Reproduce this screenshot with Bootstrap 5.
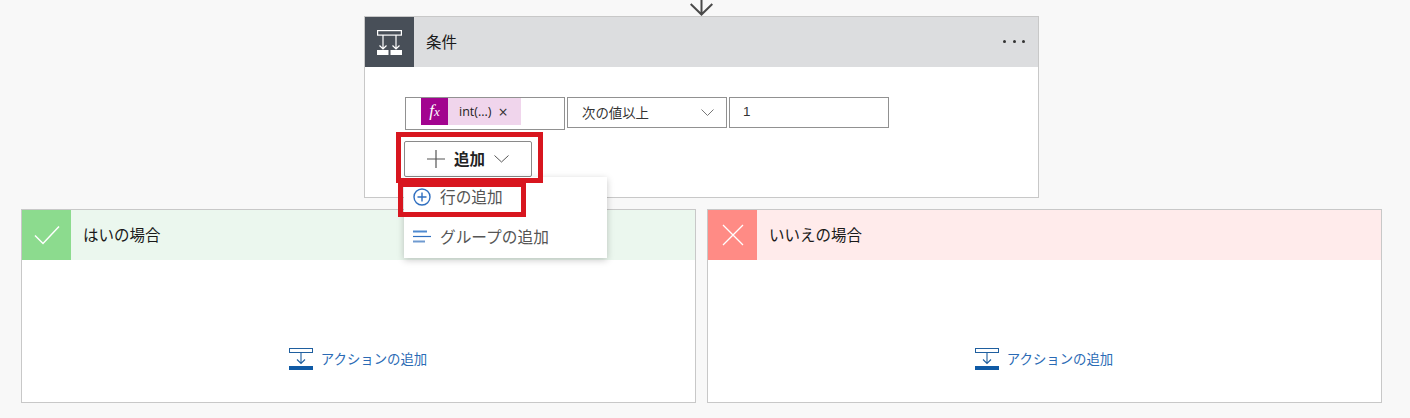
<!DOCTYPE html>
<html lang="ja">
<head>
<meta charset="utf-8">
<title>条件</title>
<link href="https://cdn.jsdelivr.net/npm/bootstrap@5.3.0/dist/css/bootstrap.min.css" rel="stylesheet">
<style>
html,body{height:100%;overflow:hidden}
body{background:#f8f8f8;font-family:"Open Sans","Noto Sans CJK JP",sans-serif;color:#222;width:1410px;height:418px}
.ja{font-family:"Noto Sans CJK JP",sans-serif}
.flow-arrow{height:16px}
.flow-arrow svg{display:block;margin-left:690px}
.flow-card{background:#fff;border:1px solid #c8c8c8;width:675px;flex:none}
.cond-card{margin-left:364px;height:182px;position:relative}
.flow-head{height:50px}
.flow-ico{width:49px;height:50px;flex:none}
.flow-title{font-size:15.500px;padding:0 0 1px 12px;color:#1a1a1a}
.h-cond{background:#dcdddf}.i-cond{background:#484f58}
.h-yes{background:#ebf7ee}.i-yes{background:#8cdb8e}
.h-no{background:#ffebeb}.i-no{background:#ff8b85}
.dots{gap:6.500px;margin-right:13px;margin-bottom:2px}
.dots span{width:3px;height:3px;border-radius:50%;background:#333;display:block}
.cond-body{padding:30px 0 0 40px}
.field{border:1px solid #919191;background:#fff;height:31px;width:160px;font-size:13.400px;color:#333}
.field-expr{height:33px;padding:0 0 5px 15px;margin-right:2px}
.field-sel{padding:0 12px 0 14px;margin-right:2px}
.field-val{padding-left:13px;font-family:"Liberation Sans",sans-serif}
.tag{width:100px;height:27px;background:#f0d5ec;font-size:12.500px}
.tag-fx{width:27px;height:27px;background:#a2048f;color:#fff;font-family:"Liberation Serif",serif;font-style:italic;font-size:17px}
.tag-fx small{font-size:13px}
.tag-txt{padding:2px 0 0 11px;color:#222}
.tag-x{margin:2px 0 0 7px;font-size:16px;line-height:1}
.add-btn{width:128px;height:36px;margin:11px 0 0 -1px;background:#fff;border:1px solid #8a8a8a;border-radius:2px;font-size:15.500px;font-weight:700;color:#222;gap:9px;padding:0}
.add-menu{position:absolute;left:39px;top:160px;width:203px;height:81px;background:#fff;box-shadow:0 2px 7px rgba(0,0,0,.22);z-index:2}
.add-item{height:40px;font-size:15.700px;color:#555;padding:0 0 0 9px;gap:9px}
.red-a,.red-b{position:absolute;border:5px solid #d8161f;z-index:3}
.red-a{left:31px;top:115px;width:147px;height:51px}
.red-b{left:33px;top:165px;width:128px;height:35px}
.branches{margin:11px 0 0 21px;gap:11px}
.branch{height:194px}
.branch-body{height:143px;padding-top:88px}
.act-add{font-size:13.400px;color:#2a6ab5;gap:8px;margin-left:-1px;text-decoration:none;line-height:21px}
</style>
</head>
<body>
<div class="d-flex flex-column">
  <div class="flow-arrow">
    <svg width="24" height="16" viewBox="0 0 24 16"><path d="M11.500 0V14.500M.7 4L11.500 14.500L22.300 4" fill="none" stroke="#4a4a4a" stroke-width="2"/></svg>
  </div>
  <div class="flow-card cond-card">
    <div class="flow-head h-cond d-flex align-items-center">
      <div class="flow-ico i-cond d-flex align-items-center justify-content-center">
        <svg width="25" height="25" viewBox="0 0 25 25"><g fill="none" stroke="#fff" stroke-width="1.200"><rect x=".6" y=".6" width="23.800" height="4.500"/><path d="M6 5V19M19 5V19M2.500 15.500L6 19L9.500 15.500M15.500 15.500L19 19L22.500 15.500"/></g><rect x="0" y="20" width="11.500" height="5" fill="#fff"/><rect x="13.500" y="20" width="11.500" height="5" fill="#fff"/></svg>
      </div>
      <div class="flow-title ja flex-grow-1">条件</div>
      <div class="dots d-flex"><span></span><span></span><span></span></div>
    </div>
    <div class="cond-body">
      <div class="d-flex align-items-start">
        <div class="field field-expr d-flex align-items-center">
          <div class="tag d-flex align-items-center">
            <span class="tag-fx d-flex align-items-center justify-content-center"><span>f<small>x</small></span></span>
            <span class="tag-txt">int(...)</span><span class="tag-x">×</span>
          </div>
        </div>
        <div class="field field-sel ja d-flex align-items-center justify-content-between">
          <span>次の値以上</span>
          <svg width="13" height="8" viewBox="0 0 13 8"><path d="M.5 .5L6.500 6.500L12.500 .5" fill="none" stroke="#777" stroke-width="1"/></svg>
        </div>
        <div class="field field-val d-flex align-items-center">1</div>
      </div>
      <button type="button" class="btn add-btn ja d-flex align-items-center justify-content-center">
        <svg width="18" height="18" viewBox="0 0 18 18"><path d="M9 0V18M0 9H18" stroke="#555" stroke-width="1.200" fill="none"/></svg>
        <span>追加</span>
        <svg width="15" height="8" viewBox="0 0 15 8"><path d="M.5 .5L7.500 7L14.500 .5" fill="none" stroke="#555" stroke-width="1"/></svg>
      </button>
    </div>
    <div class="add-menu ja">
      <div class="add-item d-flex align-items-center">
        <svg width="18" height="18" viewBox="0 0 18 18"><circle cx="9" cy="9" r="8" fill="none" stroke="#2f6fc0" stroke-width="1.400"/><path d="M9 4.500V13.500M4.500 9H13.500" stroke="#2f6fc0" stroke-width="1.400"/></svg>
        <span>行の追加</span>
      </div>
      <div class="add-item d-flex align-items-center">
        <svg width="18" height="18" viewBox="0 0 18 18"><path d="M0 3.500H14" stroke="#4f8ad0" stroke-width="2"/><path d="M0 8.500H18" stroke="#2f6fc0" stroke-width="1.200"/><path d="M0 13.500H12" stroke="#6f9ad0" stroke-width="2"/></svg>
        <span>グループの追加</span>
      </div>
    </div>
    <div class="red-a"></div>
    <div class="red-b"></div>
  </div>
  <div class="branches d-flex">
    <div class="flow-card branch">
      <div class="flow-head h-yes d-flex align-items-center">
        <div class="flow-ico i-yes d-flex align-items-center justify-content-center">
          <svg width="26" height="20" viewBox="0 0 26 20"><path d="M1 10.500L9 18.500L25 1.500" fill="none" stroke="#fff" stroke-width="1.500"/></svg>
        </div>
        <div class="flow-title ja">はいの場合</div>
      </div>
      <div class="branch-body d-flex justify-content-center">
        <a href="#" class="act-add ja d-flex align-items-start">
          <svg width="24" height="22" viewBox="0 0 24 22"><rect x=".5" y=".5" width="23" height="4" fill="none" stroke="#1f5f9f"/><path d="M12 4.500V15M8 11.500L12 15.500L16 11.500" fill="none" stroke="#1f5f9f" stroke-width="1.100"/><rect y="18" width="24" height="4" fill="#0f5aa5"/></svg>
          <span>アクションの追加</span>
        </a>
      </div>
    </div>
    <div class="flow-card branch">
      <div class="flow-head h-no d-flex align-items-center">
        <div class="flow-ico i-no d-flex align-items-center justify-content-center">
          <svg width="22" height="22" viewBox="0 0 22 22"><path d="M1 1L21 21M21 1L1 21" fill="none" stroke="#fff" stroke-width="1.300"/></svg>
        </div>
        <div class="flow-title ja">いいえの場合</div>
      </div>
      <div class="branch-body d-flex justify-content-center">
        <a href="#" class="act-add ja d-flex align-items-start">
          <svg width="24" height="22" viewBox="0 0 24 22"><rect x=".5" y=".5" width="23" height="4" fill="none" stroke="#1f5f9f"/><path d="M12 4.500V15M8 11.500L12 15.500L16 11.500" fill="none" stroke="#1f5f9f" stroke-width="1.100"/><rect y="18" width="24" height="4" fill="#0f5aa5"/></svg>
          <span>アクションの追加</span>
        </a>
      </div>
    </div>
  </div>
</div>
</body>
</html>
